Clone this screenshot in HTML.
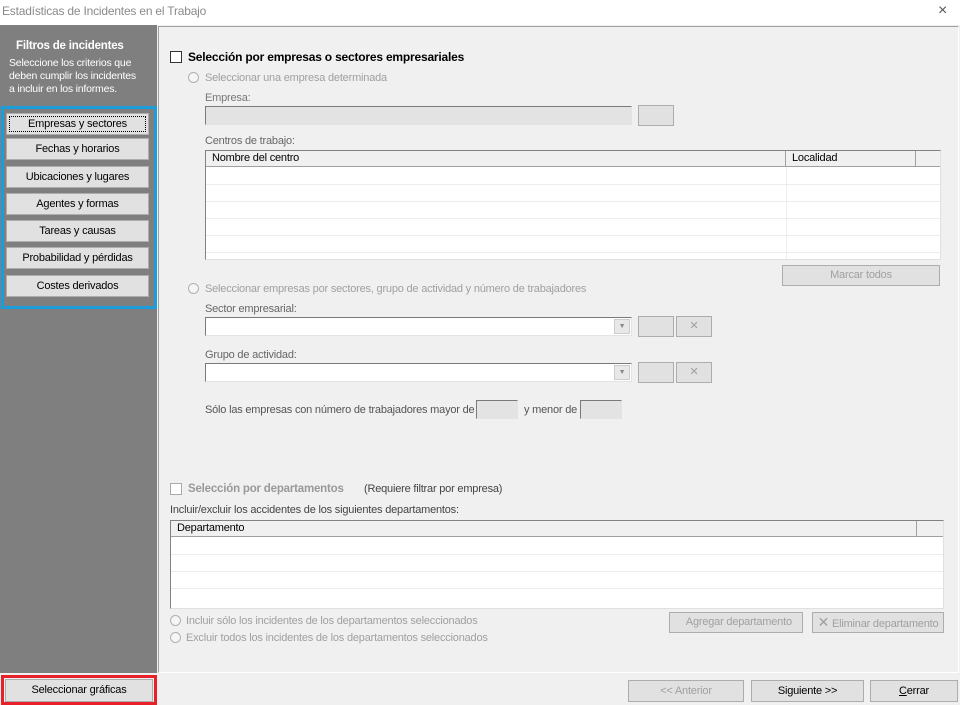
<!DOCTYPE html>
<html><head><meta charset="utf-8"><style>
*{box-sizing:border-box;margin:0;padding:0}
body{width:960px;height:705px;position:relative;background:#f0f0f0;font-family:"Liberation Sans",sans-serif;font-size:11px;color:#000;overflow:hidden;letter-spacing:-0.2px}
.a{position:absolute}
.dis{color:#a0a0a0}
.btn{position:absolute;background:#e1e1e1;border:1px solid #adadad;text-align:center;font-size:11px}
.sb{position:absolute;left:6px;width:143px;height:22px;background:#e1e1e1;border:1px solid #adadad;text-align:center;line-height:21px;font-size:11px}
.in{position:absolute;background:#fff;border:1px solid #7a7a7a;border-right-color:#e3e3e3;border-bottom-color:#e3e3e3}
.ro{background:#e3e3e3}
.grid{position:absolute;border:1px solid #828282;border-right-color:#e0e0e0;border-bottom-color:#e0e0e0;background:#fff repeating-linear-gradient(to bottom,transparent 0,transparent 16px,#fff 16px,#fff 33px,#ececec 33px,#ececec 34px)}
.hd{position:absolute;top:0;height:16px;background:#f0f0f0;border-right:1px solid #a0a0a0;border-bottom:1px solid #a0a0a0;padding-left:6px;line-height:15px}
.cb{position:absolute;width:12px;height:12px;border:1px solid #333;background:#fff}
.rad{position:absolute;width:11px;height:11px;border-radius:50%;border:1px solid #b0b0b0;background:#f5f5f5}
.rl{position:absolute;left:0;right:0;height:1px;background:#ececec}
</style></head><body>
<div class="a" style="left:0;top:0;width:960px;height:25px;background:#fff"></div>
<div class="a dis" style="left:2px;top:4px;font-size:12px;color:#8a8a8a">Estadísticas de Incidentes en el Trabajo</div>
<div class="a" style="left:938px;top:2px;font-size:16px;color:#555">×</div>

<div class="a" style="left:0;top:25px;width:157px;height:648px;background:#7f7f7f"></div>
<div class="a" style="left:16px;top:40px;color:#fff;font-weight:bold;font-size:11.5px">Filtros de incidentes</div>
<div class="a" style="left:9px;top:57px;color:#fff;font-size:10.5px;line-height:13px">Seleccione los criterios que<br>deben cumplir los incidentes<br>a incluir en los informes.</div>
<div class="a" style="left:1px;top:106px;width:156px;height:203px;border:3px solid #1b9ddb;background:#7f7f7f"></div>
<div class="sb" style="top:113px;outline:1px dotted #000;outline-offset:-4px">Empresas y sectores</div>
<div class="sb" style="top:138px">Fechas y horarios</div>
<div class="sb" style="top:166px">Ubicaciones y lugares</div>
<div class="sb" style="top:193px">Agentes y formas</div>
<div class="sb" style="top:220px">Tareas y causas</div>
<div class="sb" style="top:247px">Probabilidad y pérdidas</div>
<div class="sb" style="top:275px">Costes derivados</div>

<div class="a" style="left:158px;top:26px;width:801px;height:647px;border:1px solid #a0a0a0;border-right-color:#fff;border-bottom-color:#fff;background:#f0f0f0"></div>

<div class="cb" style="left:170px;top:51px"></div>
<div class="a" style="left:188px;top:50px;font-weight:bold;font-size:12px">Selección por empresas o sectores empresariales</div>
<div class="rad" style="left:188px;top:72px"></div>
<div class="a dis" style="left:205px;top:72px">Seleccionar una empresa determinada</div>
<div class="a dis" style="left:205px;top:92px;color:#777">Empresa:</div>
<div class="in ro" style="left:205px;top:106px;width:427px;height:19px"></div>
<div class="btn" style="left:638px;top:105px;width:36px;height:21px"></div>
<div class="a" style="left:205px;top:135px;color:#666">Centros de trabajo:</div>
<div class="grid" style="left:205px;top:150px;width:736px;height:110px">
<div class="hd" style="left:0;width:580px">Nombre del centro</div>
<div class="hd" style="left:580px;width:130px">Localidad</div>
<div class="hd" style="left:710px;width:24px;border-right:none"></div>
<div class="a" style="left:580px;top:16px;width:1px;height:92px;background:#eee"></div>
<div class="rl" style="top:33px"></div><div class="rl" style="top:50px"></div><div class="rl" style="top:67px"></div><div class="rl" style="top:84px"></div><div class="rl" style="top:101px"></div>
</div>
<div class="btn dis" style="left:782px;top:265px;width:158px;height:21px;line-height:19px">Marcar todos</div>

<div class="rad" style="left:188px;top:283px"></div>
<div class="a dis" style="left:205px;top:283px">Seleccionar empresas por sectores, grupo de actividad y número de trabajadores</div>
<div class="a" style="left:205px;top:303px;color:#666">Sector empresarial:</div>
<div class="in" style="left:205px;top:317px;width:427px;height:19px"></div>
<div class="a" style="left:614px;top:319px;width:16px;height:15px;background:#e8e8e8;border:1px solid #ccc;font-size:7px;color:#888;text-align:center;line-height:14px">▼</div>
<div class="btn" style="left:638px;top:316px;width:36px;height:21px"></div>
<div class="btn dis" style="left:676px;top:316px;width:36px;height:21px;line-height:19px">✕</div>
<div class="a" style="left:205px;top:349px;color:#666">Grupo de actividad:</div>
<div class="in" style="left:205px;top:363px;width:427px;height:19px"></div>
<div class="a" style="left:614px;top:365px;width:16px;height:15px;background:#e8e8e8;border:1px solid #ccc;font-size:7px;color:#888;text-align:center;line-height:14px">▼</div>
<div class="btn" style="left:638px;top:362px;width:36px;height:21px"></div>
<div class="btn dis" style="left:676px;top:362px;width:36px;height:21px;line-height:19px">✕</div>
<div class="a" style="left:205px;top:404px;color:#555">Sólo las empresas con número de trabajadores mayor de</div>
<div class="in ro" style="left:476px;top:400px;width:42px;height:19px"></div>
<div class="a" style="left:524px;top:404px;color:#555">y menor de</div>
<div class="in ro" style="left:580px;top:400px;width:42px;height:19px"></div>

<div class="cb" style="left:170px;top:483px;border-color:#aaa"></div>
<div class="a dis" style="left:188px;top:483px;font-weight:bold;font-size:11.5px;color:#999">Selección por departamentos</div>
<div class="a" style="left:364px;top:483px;color:#444">(Requiere filtrar por empresa)</div>
<div class="a" style="left:170px;top:504px;color:#444">Incluir/excluir los accidentes de los siguientes departamentos:</div>
<div class="grid" style="left:170px;top:520px;width:774px;height:89px">
<div class="hd" style="left:0;width:746px">Departamento</div>
<div class="hd" style="left:746px;width:26px;border-right:none"></div>
<div class="rl" style="top:33px"></div><div class="rl" style="top:50px"></div><div class="rl" style="top:67px"></div>
</div>
<div class="rad" style="left:170px;top:615px"></div>
<div class="a dis" style="left:186px;top:615px">Incluir sólo los incidentes de los departamentos seleccionados</div>
<div class="rad" style="left:170px;top:632px"></div>
<div class="a dis" style="left:186px;top:632px">Excluir todos los incidentes de los departamentos seleccionados</div>
<div class="btn dis" style="left:669px;top:612px;width:134px;height:21px;line-height:19px">&nbsp;&nbsp;Agregar departamento</div>
<div class="btn dis" style="left:812px;top:612px;width:132px;height:21px;line-height:19px"><span style="font-size:14px">✕</span> Eliminar departamento</div>

<div class="a" style="left:1px;top:675px;width:156px;height:30px;border:3px solid #e8202a"></div>
<div class="btn" style="left:5px;top:679px;width:148px;height:23px;line-height:21px">Seleccionar gráficas</div>
<div class="btn dis" style="left:628px;top:680px;width:116px;height:22px;line-height:20px">&lt;&lt; Anterior</div>
<div class="btn" style="left:751px;top:680px;width:113px;height:22px;line-height:20px">Siguiente &gt;&gt;</div>
<div class="btn" style="left:870px;top:680px;width:88px;height:22px;line-height:20px"><u>C</u>errar</div>
</body></html>
